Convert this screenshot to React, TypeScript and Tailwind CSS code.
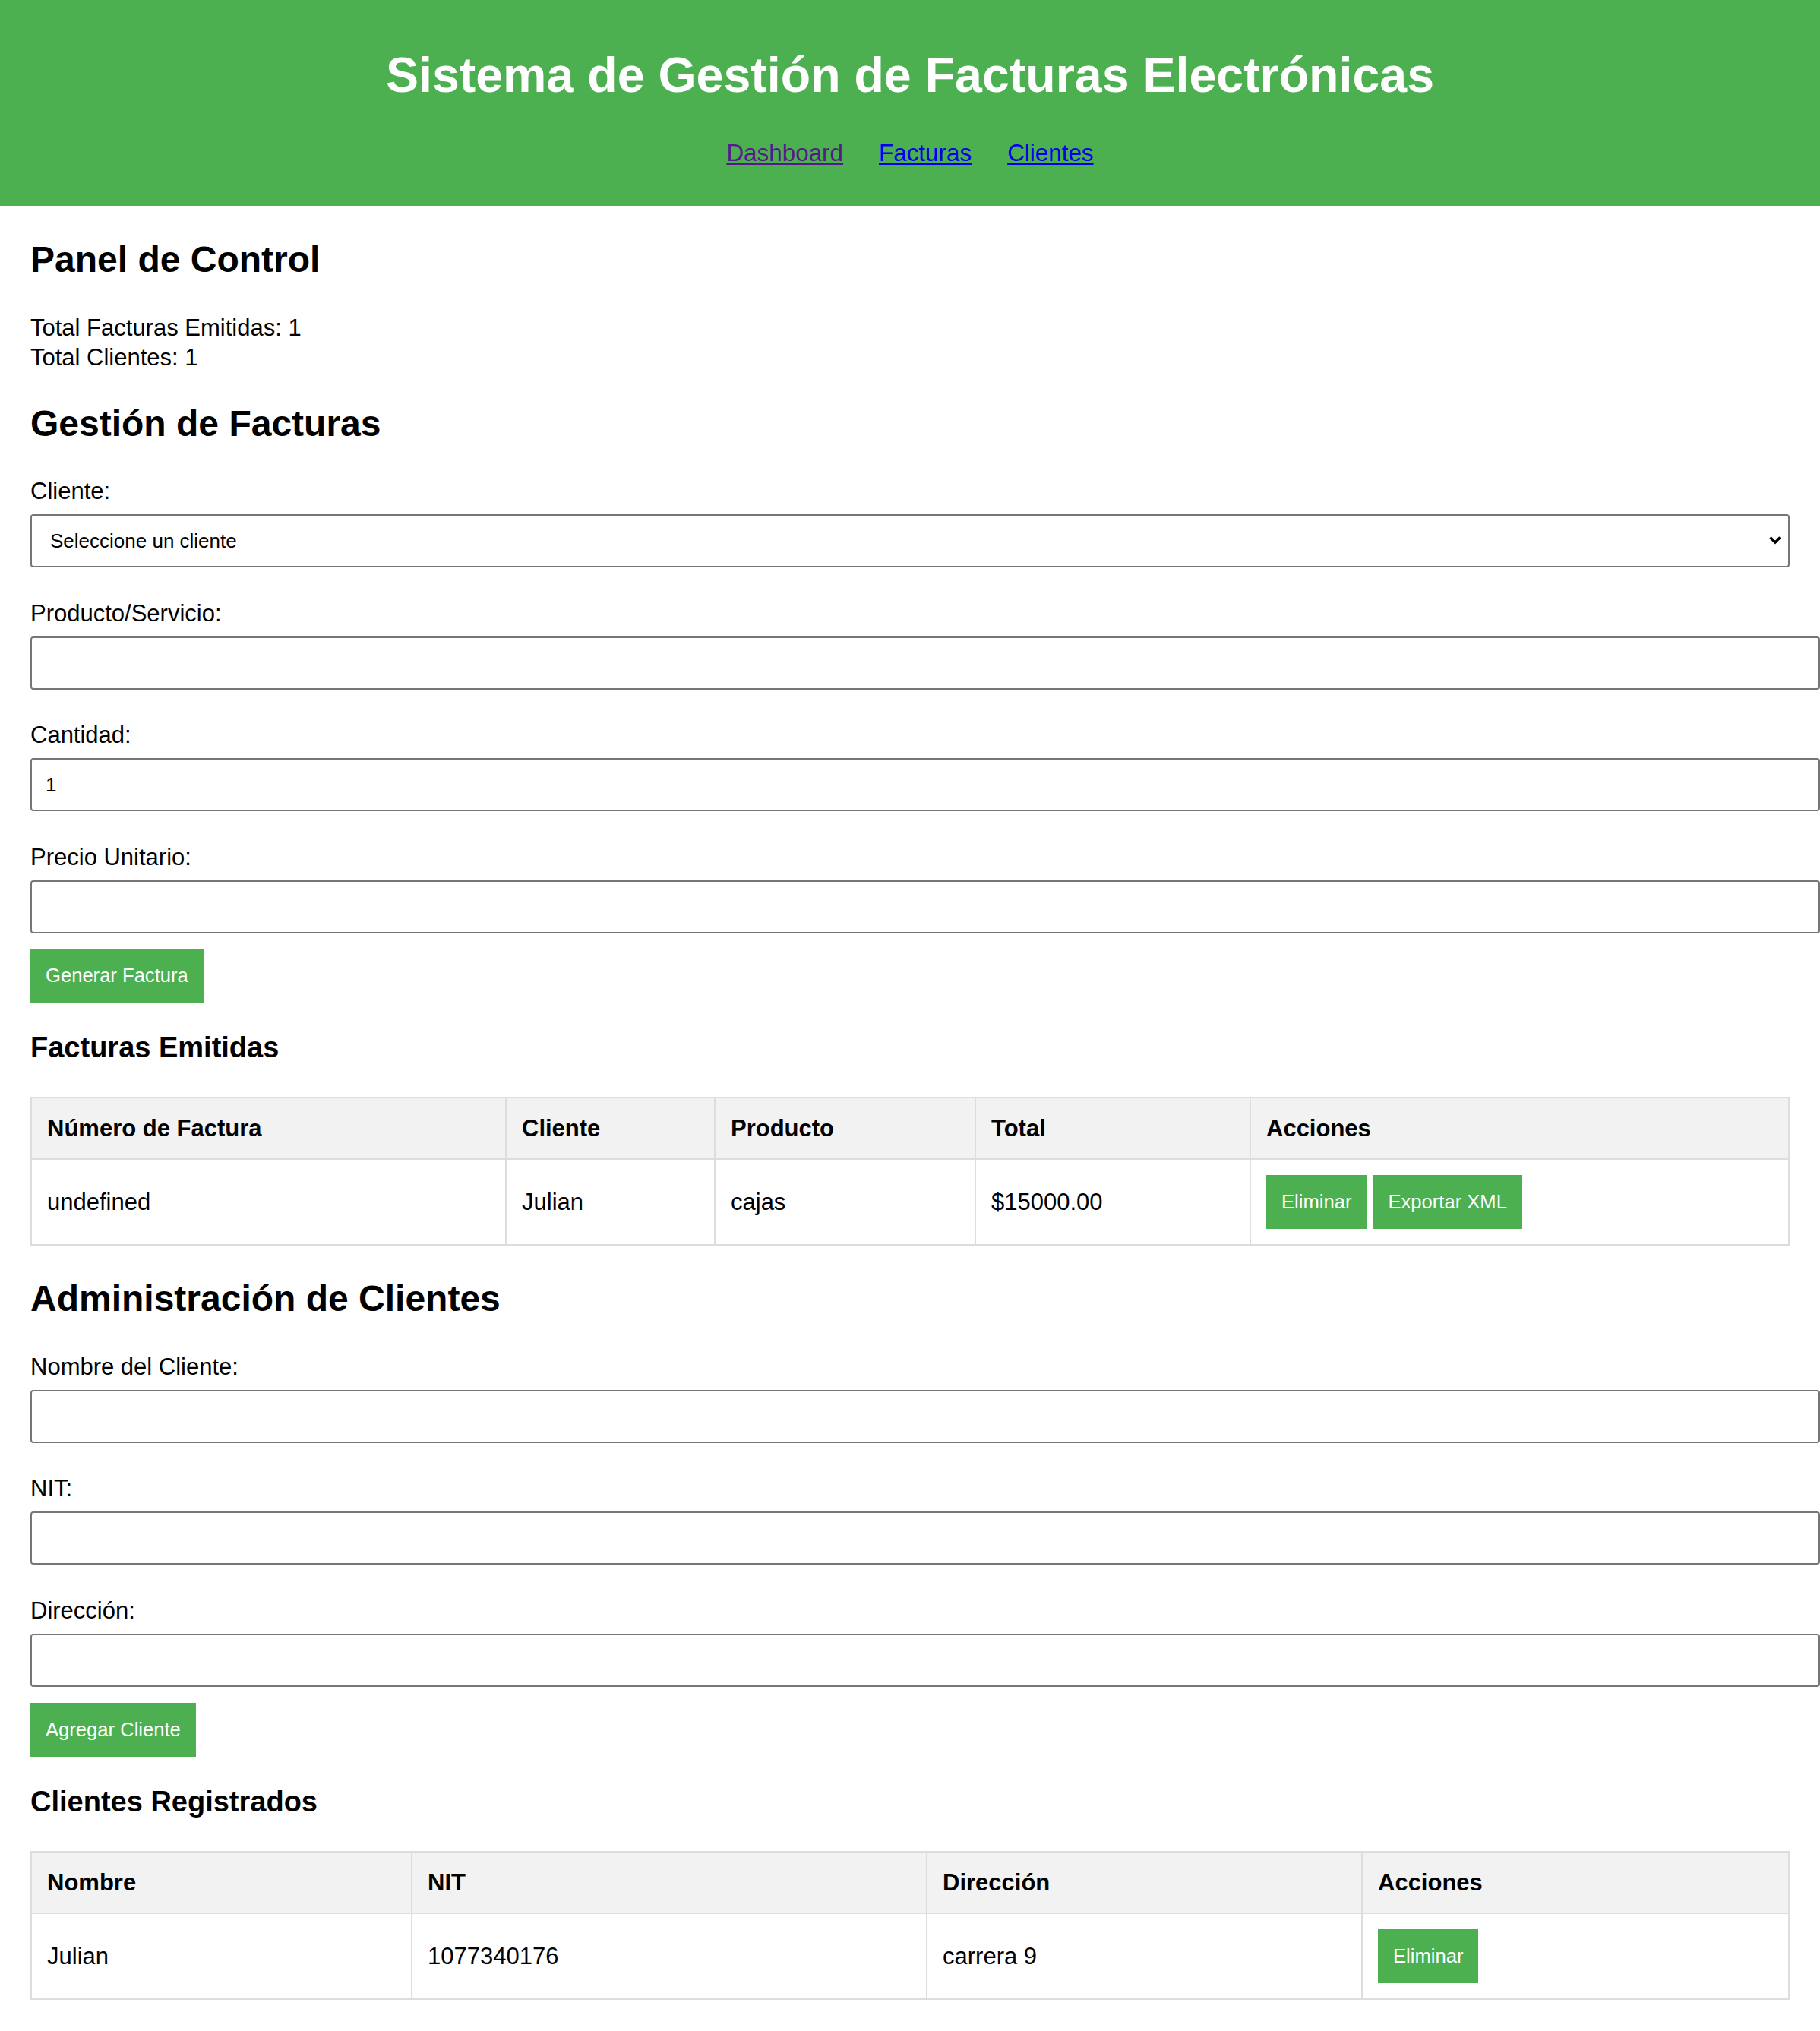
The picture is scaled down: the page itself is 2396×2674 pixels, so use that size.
import React from "react";

function Field({ label, children }: { label: string; children: React.ReactNode }) {
  return (
    <div>
      <label className="block">{label}</label>
      <div className="mt-[11px]">{children}</div>
    </div>
  );
}

function TextInput({ value }: { value?: string }) {
  return (
    <input
      type="text"
      defaultValue={value}
      className="block box-border w-[calc(100%+40px)] h-[70px] border-2 border-[#767676] rounded-[4px] bg-white px-[18px] text-[26px] leading-[30px] text-black outline-none"
    />
  );
}

function GreenButton({ children }: { children: React.ReactNode }) {
  return (
    <button
      type="button"
      className="inline-block bg-[#4CAF50] text-white text-[25.6px] leading-[31px] px-[20px] py-[20px] whitespace-nowrap"
    >
      {children}
    </button>
  );
}

export default function App() {
  return (
    <div className="min-h-screen bg-white text-black font-['Liberation_Sans',Arial,sans-serif] text-[31px] leading-[39px]">
      <header className="bg-[#4CAF50] text-white text-center pt-[62px] pb-[51px]">
        <h1 className="text-[64.5px] leading-[74px] font-bold">
          Sistema de Gestión de Facturas Electrónicas
        </h1>
        <nav className="mt-[48px] flex justify-center gap-[47px] text-[31.4px] leading-[36px]">
          <a href="#dashboard" className="underline text-[#551A8B]">Dashboard</a>
          <a href="#facturas" className="underline text-[#0000EE]">Facturas</a>
          <a href="#clientes" className="underline text-[#0000EE]">Clientes</a>
        </nav>
      </header>

      <main className="px-[40px] pt-[43px] pb-[41px]">
        <section>
          <h2 className="text-[48px] leading-[56px] font-bold">Panel de Control</h2>
          <div className="mt-[42px]">
            <p>Total Facturas Emitidas: 1</p>
            <p>Total Clientes: 1</p>
          </div>
        </section>

        <section className="mt-[40px]">
          <h2 className="text-[48px] leading-[56px] font-bold">Gestión de Facturas</h2>
          <div className="mt-[41px] flex flex-col gap-[40.5px]">
            <Field label="Cliente:">
              <div className="relative">
                <select className="block w-full h-[70px] appearance-none border-2 border-[#767676] rounded-[4px] bg-white pl-[24px] pr-[50px] text-[26px] leading-[30px] text-black outline-none">
                  <option>Seleccione un cliente</option>
                  <option>Julian</option>
                </select>
                <svg
                  className="absolute right-[10px] top-[28px] pointer-events-none"
                  width="18"
                  height="13"
                  viewBox="0 0 18 13"
                >
                  <path d="M2.5 2.5 L9 9 L15.5 2.5" fill="none" stroke="#000" strokeWidth="3.4" />
                </svg>
              </div>
            </Field>
            <Field label="Producto/Servicio:">
              <TextInput />
            </Field>
            <Field label="Cantidad:">
              <TextInput value="1" />
            </Field>
            <Field label="Precio Unitario:">
              <TextInput />
            </Field>
          </div>
          <div className="mt-[20px]">
            <GreenButton>Generar Factura</GreenButton>
          </div>

          <h3 className="mt-[37px] text-[38px] leading-[44px] font-bold">Facturas Emitidas</h3>
          <table className="mt-[43px] w-full table-fixed border-collapse">
            <colgroup>
              <col className="w-[625px]" />
              <col className="w-[275px]" />
              <col className="w-[343px]" />
              <col className="w-[362px]" />
              <col />
            </colgroup>
            <thead>
              <tr className="bg-[#f2f2f2]">
                <th className="border-2 border-[#ddd] p-[20px] text-left font-bold">Número de Factura</th>
                <th className="border-2 border-[#ddd] p-[20px] text-left font-bold">Cliente</th>
                <th className="border-2 border-[#ddd] p-[20px] text-left font-bold">Producto</th>
                <th className="border-2 border-[#ddd] p-[20px] text-left font-bold">Total</th>
                <th className="border-2 border-[#ddd] p-[20px] text-left font-bold">Acciones</th>
              </tr>
            </thead>
            <tbody>
              <tr>
                <td className="border-2 border-[#ddd] p-[20px]">undefined</td>
                <td className="border-2 border-[#ddd] p-[20px]">Julian</td>
                <td className="border-2 border-[#ddd] p-[20px]">cajas</td>
                <td className="border-2 border-[#ddd] p-[20px]">$15000.00</td>
                <td className="border-2 border-[#ddd] p-[20px]">
                  <div className="flex gap-[8px]">
                    <GreenButton>Eliminar</GreenButton>
                    <GreenButton>Exportar XML</GreenButton>
                  </div>
                </td>
              </tr>
            </tbody>
          </table>
        </section>

        <section className="mt-[42px]">
          <h2 className="text-[48px] leading-[56px] font-bold">Administración de Clientes</h2>
          <div className="mt-[42px] flex flex-col gap-[40.5px]">
            <Field label="Nombre del Cliente:">
              <TextInput />
            </Field>
            <Field label="NIT:">
              <TextInput />
            </Field>
            <Field label="Dirección:">
              <TextInput />
            </Field>
          </div>
          <div className="mt-[21px]">
            <GreenButton>Agregar Cliente</GreenButton>
          </div>

          <h3 className="mt-[37px] text-[38px] leading-[44px] font-bold">Clientes Registrados</h3>
          <table className="mt-[43px] w-full table-fixed border-collapse">
            <colgroup>
              <col className="w-[501px]" />
              <col className="w-[678px]" />
              <col className="w-[573px]" />
              <col />
            </colgroup>
            <thead>
              <tr className="bg-[#f2f2f2]">
                <th className="border-2 border-[#ddd] p-[20px] text-left font-bold">Nombre</th>
                <th className="border-2 border-[#ddd] p-[20px] text-left font-bold">NIT</th>
                <th className="border-2 border-[#ddd] p-[20px] text-left font-bold">Dirección</th>
                <th className="border-2 border-[#ddd] p-[20px] text-left font-bold">Acciones</th>
              </tr>
            </thead>
            <tbody>
              <tr>
                <td className="border-2 border-[#ddd] p-[20px]">Julian</td>
                <td className="border-2 border-[#ddd] p-[20px]">1077340176</td>
                <td className="border-2 border-[#ddd] p-[20px]">carrera 9</td>
                <td className="border-2 border-[#ddd] p-[20px]">
                  <div className="flex gap-[8px]">
                    <GreenButton>Eliminar</GreenButton>
                  </div>
                </td>
              </tr>
            </tbody>
          </table>
        </section>
      </main>
    </div>
  );
}
